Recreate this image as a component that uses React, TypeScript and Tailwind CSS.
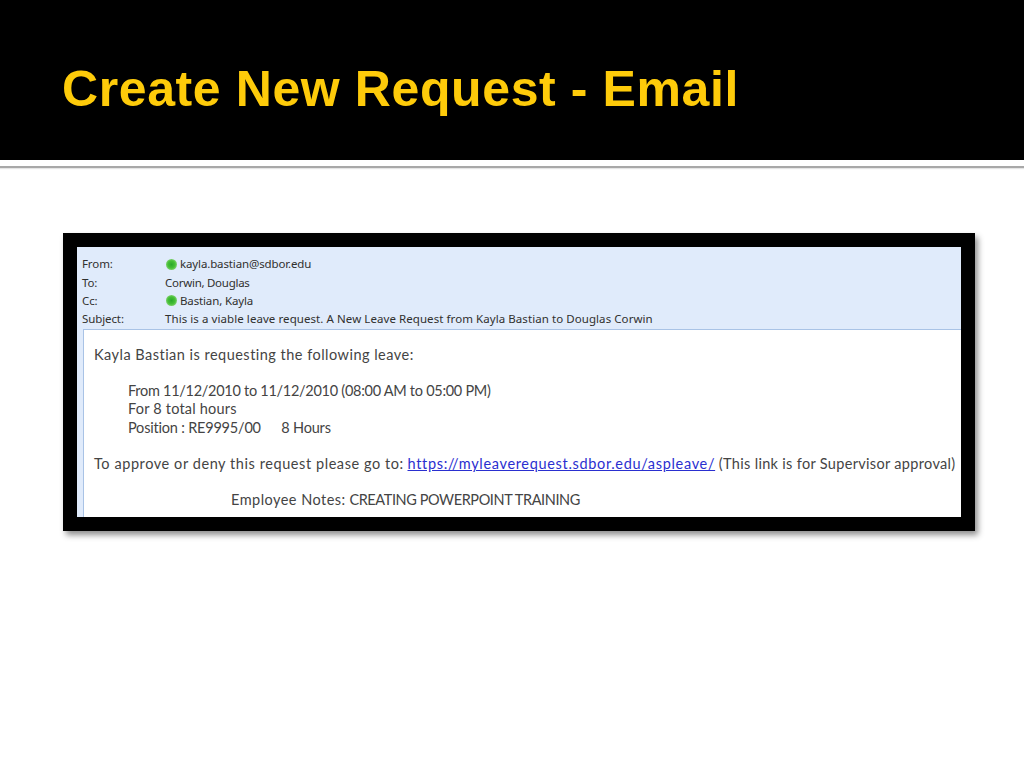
function Dot() {
  return <span className="inline-block w-[11px] h-[11px] rounded-full bg-[radial-gradient(circle_at_50%_50%,#2aa82a_0%,#45bf35_45%,#b7e2a8_100%)] mr-[3px] ml-[1px] shrink-0" />;
}

function HeaderRow({ label, dot, value, cls }: { label: string; dot?: boolean; value: string; cls: string }) {
  return (
    <div className="flex items-center h-[18.3px]">
      <span className="w-[83px] shrink-0 tracking-[-0.1px]">{label}</span>
      {dot && <Dot />}
      <span className={cls}>{value}</span>
    </div>
  );
}

export default function App() {
  return (
    <div className="w-[1024px] h-[768px] bg-white overflow-hidden font-['Liberation_Sans',sans-serif]">
      <header className="h-[160px] bg-black pl-[62px] pt-[57px]">
        <h1 className="text-[50px] leading-[64px] font-bold text-[#fecb0a] tracking-[0.6px]">Create New Request - Email</h1>
      </header>
      <div className="h-[8px] border-b-2 border-b-[#a8a8a8] mb-[65px] shadow-[0_1px_1px_#e5e5e5]" />
      <div className="mx-[63px] w-[912px] h-[298px] bg-black p-[14px] shadow-[3px_4px_6px_#8f8f8f]">
        <div className="h-[270px] bg-[#e0ebfb] flex flex-col">
          <div className="h-[82px] pt-[8px] pl-[5px] text-[11.5px] leading-none text-[#30302e] font-['Noto_Sans',sans-serif]">
            <HeaderRow label="From:" dot value="kayla.bastian@sdbor.edu" cls="tracking-[-0.13px]" />
            <HeaderRow label="To:" value="Corwin, Douglas" cls="tracking-[-0.27px]" />
            <HeaderRow label="Cc:" dot value="Bastian, Kayla" cls="tracking-[-0.14px]" />
            <HeaderRow label="Subject:" value="This is a viable leave request. A New Leave Request from Kayla Bastian to Douglas Corwin" cls="tracking-[0.07px]" />
          </div>
          <div className="flex-1 ml-[6px] bg-white border-t border-l border-[#a9c3e6] pl-[10px] pt-[16px] text-[14.5px] leading-[18.2px] text-[#444444] font-['Lato',sans-serif] whitespace-nowrap">
            <p className="tracking-[0.48px]">Kayla Bastian is requesting the following leave:</p>
            <div className="mt-[18px] pl-[34px]">
              <p className="tracking-[-0.28px]">From 11/12/2010 to 11/12/2010 (08:00 AM to 05:00 PM)</p>
              <p className="tracking-[0.2px]">For 8 total hours</p>
              <p className="tracking-[-0.2px]">Position : RE9995/00 <span className="ml-[17px]">8 Hours</span></p>
            </div>
            <p className="mt-[18px]">
              <span className="tracking-[0.57px]">To approve or deny this request please go to:</span>{" "}
              <a className="text-[#2a2fd0] underline tracking-[0.67px]">https://myleaverequest.sdbor.edu/aspleave/</a>{" "}
              <span className="tracking-[0.32px]">(This link is for Supervisor approval)</span>
            </p>
            <p className="mt-[18px] pl-[137px]">
              <span className="tracking-[0.47px]">Employee Notes:</span>{" "}
              <span className="tracking-[-0.4px]">CREATING POWERPOINT TRAINING</span>
            </p>
          </div>
        </div>
      </div>
    </div>
  );
}
